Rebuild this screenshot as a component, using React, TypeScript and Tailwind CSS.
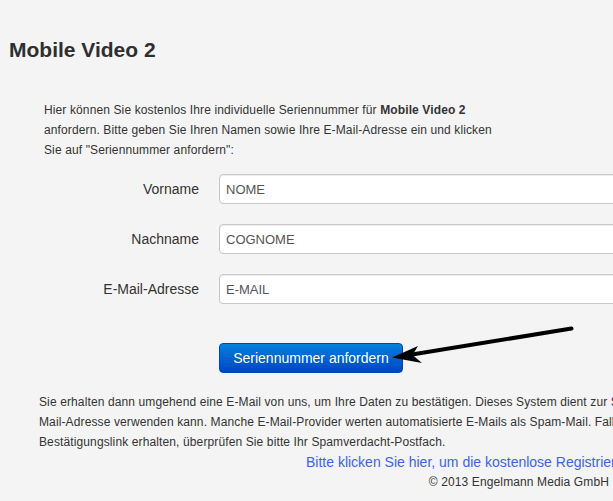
export default function App() {
  const rows = [
    { label: "Vorname", value: "NOME" },
    { label: "Nachname", value: "COGNOME" },
    { label: "E-Mail-Adresse", value: "E-MAIL" },
  ]

  return (
    <div className="relative w-[613px] h-[501px] overflow-hidden bg-[#f4f4f4] text-[#333] font-['Liberation_Sans',Arial,sans-serif]">
      {/* Title */}
      <h1 className="pt-[36px] pl-[9px] text-[21px] leading-[28px] font-bold text-[#2f2f2f]">Mobile Video 2</h1>

      {/* Intro */}
      <p className="mt-[36px] ml-[44px] text-[12px] leading-[20px] tracking-[0.12px] whitespace-nowrap">
        Hier können Sie kostenlos Ihre individuelle Seriennummer für <b>Mobile Video 2</b>
        <br />
        anfordern. Bitte geben Sie Ihren Namen sowie Ihre E-Mail-Adresse ein und klicken
        <br />
        Sie auf "Seriennummer anfordern":
      </p>

      {/* Form */}
      <div className="mt-[14px] flex flex-col gap-[20px]">
        {rows.map((r) => (
          <div key={r.label} className="flex items-center">
            <label className="w-[199px] shrink-0 text-right text-[14px]">{r.label}</label>
            <input
              readOnly
              value={r.value}
              className="ml-[20px] w-[450px] h-[30px] shrink-0 px-[6px] bg-white border border-[#c8c8c8] rounded-[4px] text-[13px] text-[#555] shadow-[inset_0_1px_1px_rgba(0,0,0,0.075)] outline-none"
            />
          </div>
        ))}
      </div>

      <button className="mt-[39px] ml-[219px] w-[184px] h-[30px] rounded-[4px] border border-[#0046b8] bg-linear-to-b from-[#0a80dc] to-[#0044c6] text-white text-[14px] leading-none">
        Seriennummer anfordern
      </button>

      {/* Info */}
      <p className="mt-[19px] ml-[39px] text-[12px] leading-[20px] tracking-[0.12px] whitespace-nowrap">
        Sie erhalten dann umgehend eine E-Mail von uns, um Ihre Daten zu bestätigen. Dieses System dient zur Sicherheit, dass niemand anderes Ihre E-
        <br />
        Mail-Adresse verwenden kann. Manche E-Mail-Provider werten automatisierte E-Mails als Spam-Mail. Falls Sie keine E-Mail mit dem
        <br />
        Bestätigungslink erhalten, überprüfen Sie bitte Ihr Spamverdacht-Postfach.
      </p>
      <a href="#" className="block pl-[306px] text-[14px] leading-[20px] text-[#3d63ee] whitespace-nowrap">
        Bitte klicken Sie hier, um die kostenlose Registrierung abzuschließen.
      </a>
      <div className="pr-[4px] text-right text-[12px] leading-[20px] tracking-[0.12px]">© 2013 Engelmann Media GmbH</div>

      {/* Arrow annotation */}
      <svg className="absolute inset-0 pointer-events-none" width="613" height="501" viewBox="0 0 613 501">
        <line x1="571.5" y1="328.5" x2="412" y2="354.5" stroke="#000" strokeWidth="4" strokeLinecap="round" />
        <polygon points="392,357.5 418,346 412.5,355 422,363" fill="#000" />
      </svg>
    </div>
  )
}
